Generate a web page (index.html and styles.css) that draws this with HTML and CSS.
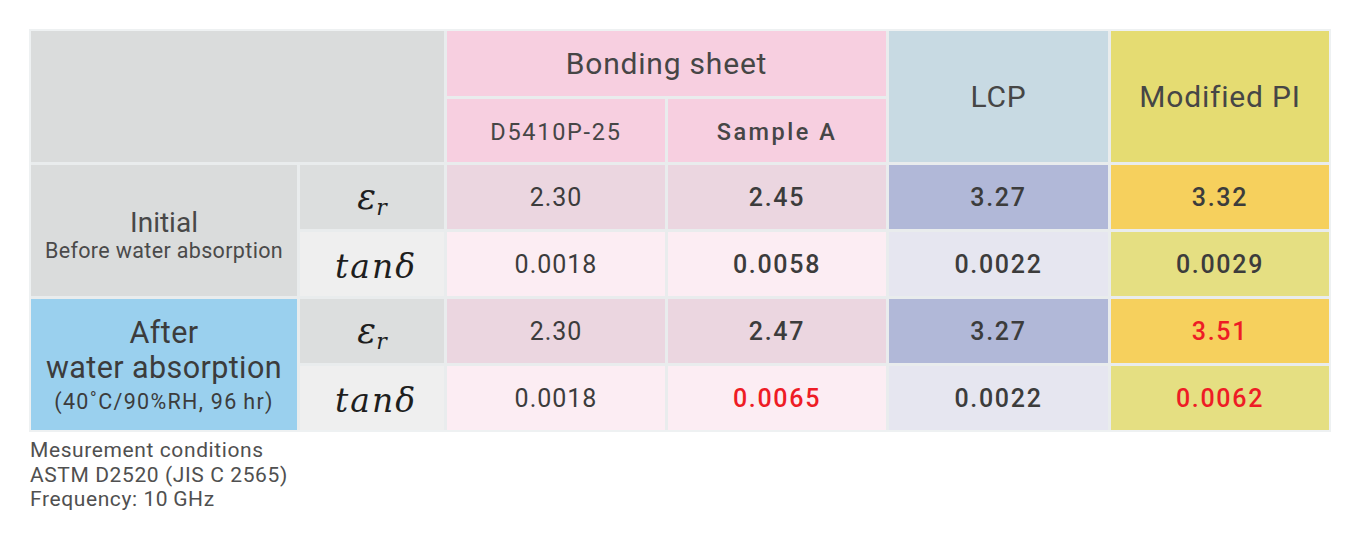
FILE: index.html
```html
<!DOCTYPE html>
<html lang="en">
<head>
<meta charset="utf-8">
<title>Dielectric properties</title>
<link rel="stylesheet" href="styles.css">
</head>
<body>
<div class="page">
  <div class="frame">
    <div class="grid">
      <div class="cell blank"></div>
      <div class="cell h-pink h-big pos-bond">Bonding sheet</div>
      <div class="cell h-lcp h-big pos-lcp">LCP</div>
      <div class="cell h-pi h-big pos-pi">Modified PI</div>
      <div class="cell h-pink h-sub pos-d54">D5410P-25</div>
      <div class="cell h-pink h-sub med pos-sa">Sample A</div>

      <div class="cell cond initial">
        <span class="c-main">Initial</span>
        <span class="c-sub">Before water absorption</span>
      </div>
      <div class="cell sym sym-e"><span class="math">ε<sub>r</sub></span></div>
      <div class="cell v b-e">2.30</div>
      <div class="cell v b-e med">2.45</div>
      <div class="cell v l-e med">3.27</div>
      <div class="cell v p-e med">3.32</div>

      <div class="cell sym sym-t"><span class="math">tanδ</span></div>
      <div class="cell v b-t">0.0018</div>
      <div class="cell v b-t med">0.0058</div>
      <div class="cell v l-t med">0.0022</div>
      <div class="cell v p-t med">0.0029</div>

      <div class="cell cond after">
        <span class="a-main">After<br>water absorption</span>
        <span class="a-sub">(40˚C/90%RH, 96&#8201;hr)</span>
      </div>
      <div class="cell sym sym-e"><span class="math">ε<sub>r</sub></span></div>
      <div class="cell v b-e">2.30</div>
      <div class="cell v b-e med">2.47</div>
      <div class="cell v l-e med">3.27</div>
      <div class="cell v p-e med red">3.51</div>

      <div class="cell sym sym-t"><span class="math">tanδ</span></div>
      <div class="cell v b-t">0.0018</div>
      <div class="cell v b-t med red">0.0065</div>
      <div class="cell v l-t med">0.0022</div>
      <div class="cell v p-t med red">0.0062</div>
    </div>
  </div>
  <div class="notes">
    <p>Mesurement conditions</p>
    <p>ASTM D2520 (JIS C 2565)</p>
    <p>Frequency: 10&#8201;GHz</p>
  </div>
</div>
</body>
</html>
```

FILE: styles.css
```css
* { box-sizing: border-box; }
html, body { margin: 0; padding: 0; background: #ffffff; }
body { font-family: Roboto, "Liberation Sans", Arial, sans-serif; color: #444444; }

.page { padding: 29px 0 0 29px; }

.frame {
  display: inline-block;
  padding: 2px;
  background: #eef1f2;
  vertical-align: top;
}

.grid {
  display: grid;
  grid-template-columns: 266px 144px 218px 218px 219px 218px;
  grid-template-rows: 65px 63px 64px 64px 64px 64px;
  gap: 3px;
  background: #e9eced;
}

.cell {
  display: flex;
  align-items: center;
  justify-content: center;
  text-align: center;
  white-space: nowrap;
}

.blank { grid-column: 1 / 3; grid-row: 1 / 3; background: #dadcdc; }
.pos-bond { grid-column: 3 / 5; grid-row: 1; }
.pos-lcp { grid-column: 5; grid-row: 1 / 3; }
.pos-pi { grid-column: 6; grid-row: 1 / 3; }
.pos-d54 { grid-column: 3; grid-row: 2; }
.pos-sa { grid-column: 4; grid-row: 2; }

.h-big { font-size: 30px; letter-spacing: 0.8px; color: #464646; }
.h-sub { font-size: 23.5px; letter-spacing: 1.7px; color: #464646; padding-top: 2px; }
.h-sub.med { letter-spacing: 2.5px; }
.h-pink { background: #f7cfe0; }
.h-lcp { background: #c8dae3; }
.h-pi { background: #e5dc72; }

.med { font-weight: 500; }

.cond { grid-column: 1; flex-direction: column; }
.initial { grid-row: 3 / 5; background: #dadcdc; padding-top: 8px; }
.initial .c-main { font-size: 28px; line-height: 32px; color: #484848; }
.initial .c-sub { font-size: 21.5px; line-height: 24px; letter-spacing: 0.35px; color: #4a4a4a; }

.after { grid-row: 5 / 7; background: #9ad0ee; padding-top: 4px; }
.after .a-main { font-size: 30.5px; line-height: 35px; letter-spacing: 0.4px; color: #3c3c3c; }
.after .a-sub { font-size: 21.5px; line-height: 34px; letter-spacing: 1.3px; color: #3c3c3c; }

.sym { font-family: "DejaVu Serif", "Liberation Serif", serif; font-style: italic; color: #1e1e1e; }
.sym-e { background: #dcdede; }
.sym-t { background: #efefef; padding-top: 4px; padding-left: 8px; }
.math { font-size: 33px; line-height: 1; letter-spacing: 2px; }
.sym-e .math { font-size: 35px; letter-spacing: 0; }
.math sub { font-size: 22px; vertical-align: -6px; line-height: 0; }

.v { font-size: 25px; letter-spacing: 1px; color: #3c3c3c; }
.v.med { letter-spacing: 1.7px; }
.b-e { background: #ebd6e0; }
.b-t { background: #fcedf3; }
.l-e { background: #b1b8d8; }
.l-t { background: #e6e6f0; }
.p-e { background: #f6d05d; }
.p-t { background: #e5df82; }

.red { color: #ee1c25; }

.notes { margin-top: 6px; padding-left: 1px; }
.notes p { margin: 0; font-size: 21px; line-height: 24.5px; letter-spacing: 0.6px; color: #505050; }
```
